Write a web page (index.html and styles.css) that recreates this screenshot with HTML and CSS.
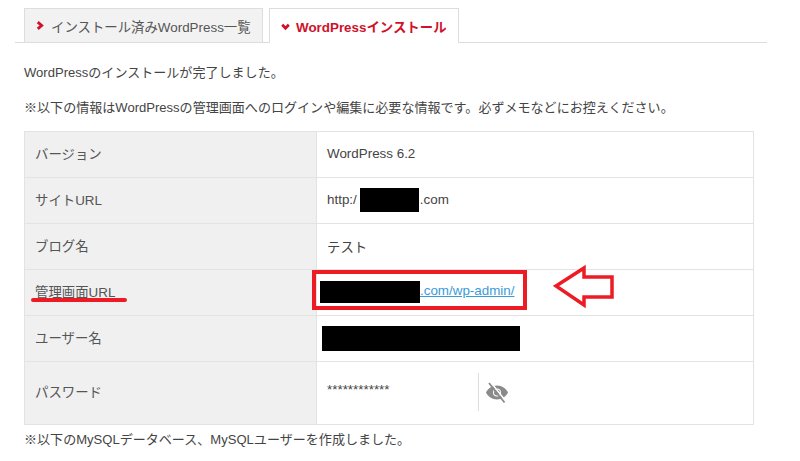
FILE: index.html
```html
<!DOCTYPE html>
<html lang="ja">
<head>
<meta charset="utf-8">
<title>WordPressインストール</title>
<link rel="stylesheet" href="styles.css">
</head>
<body>
<div class="page">
  <ul class="tabs">
    <li class="tab"><svg class="chev" viewBox="0 0 10 10"><path d="M2.500 2 6 5 2.500 8" /></svg>インストール済みWordPress一覧</li>
    <li class="tab active"><svg class="chev" viewBox="0 0 10 10"><path d="M2 3.500 5 6.500 8 3.500" /></svg>WordPressインストール</li>
  </ul>
  <div class="content">
    <p class="msg first">WordPressのインストールが完了しました。</p>
    <p class="msg second">※以下の情報はWordPressの管理画面へのログインや編集に必要な情報です。必ずメモなどにお控えください。</p>
    <table class="info">
      <tr class="r46"><th>バージョン</th><td>WordPress 6.2</td></tr>
      <tr class="r46"><th>サイトURL</th><td>http:/<span class="mask m-site"></span>.com</td></tr>
      <tr class="r46"><th>ブログ名</th><td>テスト</td></tr>
      <tr class="r46"><th>管理画面URL</th><td><a class="link" href="#"><span class="mask m-admin"></span>.com/wp-admin/</a></td></tr>
      <tr class="r46"><th>ユーザー名</th><td><span class="mask m-user"></span></td></tr>
      <tr class="r63"><th>パスワード</th><td>
        <div class="pw"><span class="stars">************</span>
          <span class="eye"><svg viewBox="0 0 24 24" width="24" height="24"><path class="eye-fill" d="M12 5.500C7 5.500 3 8.500 1 12.500c2 4 6 7 11 7s9-3 11-7c-2-4-6-7-11-7Zm0 11a4 4 0 1 1 0-8 4 4 0 0 1 0 8Z"/><circle class="eye-fill" cx="12" cy="12.500" r="3"/><path class="eye-gap" d="M5.500 2 21 21.500"/><path class="eye-slash" d="M4 3 19.500 22.500"/></svg></span>
        </div></td></tr>
    </table>
    <p class="msg third">※以下のMySQLデータベース、MySQLユーザーを作成しました。</p>
  </div>
  <div class="mark-line"></div>
  <div class="mark-box"></div>
  <svg class="mark-arrow" viewBox="0 0 64 44" width="64" height="44"><path d="M3 22 31 4V13H59V33H31V41Z"/></svg>
</div>
</body>
</html>
```
FILE: styles.css
```css
* { box-sizing: border-box; }
html, body { margin: 0; padding: 0; background: #fff; }
body {
  width: 800px; height: 461px; overflow: hidden;
  font-family: "Liberation Sans", "Noto Sans CJK JP", sans-serif;
  font-size: 13px; color: #444;
}
.page { position: relative; width: 800px; height: 461px; padding: 8px 33px 0 15px; }
.tabs {
  list-style: none; margin: 0; padding: 0 0 0 9px;
  display: flex; gap: 6px; height: 35px;
  border-bottom: 1px solid #ddd;
}
.tab {
  width: 239px; height: 34px; display: flex; align-items: center;
  padding-left: 10px; background: #f2f2f2; color: #555;
  border: 1px solid #ddd; border-bottom: 0; font-size: 13.400px;
}
.tab.active {
  width: 190px; height: 35px; background: #fff; color: #d0112b; font-weight: 700;
  padding-left: 10px; position: relative;
}
.chev { width: 11px; height: 11px; margin-right: 5px; flex: none; }
.chev path { fill: none; stroke: #d0112b; stroke-width: 2.600; }
.content { padding-left: 9px; width: 739px; }
.msg { margin: 0; font-size: 13.050px; line-height: 20px; color: #444; }
.first { padding-top: 20px; }
.second { padding-top: 15px; }
.third { padding-top: 5px; }
.info {
  border-collapse: collapse; table-layout: fixed; width: 730px; margin-top: 13px;
  border: 1px solid #e3e3e3;
}
.info th, .info td { border: 1px solid #e3e3e3; padding: 0 10px 2px; font-weight: 400; text-align: left; font-size: 13.400px; }
.info th { width: 292px; background: #f0f0f0; color: #555; padding-bottom: 4px; }
.r46 { height: 46px; }
.r63 { height: 63px; }
.mask { display: inline-block; background: #000; vertical-align: middle; }
.m-site { width: 59px; height: 24px; margin-left: 3px; margin-right: 1px; }
.m-admin { width: 100px; height: 22px; margin-left: -7px; }
.m-user { width: 198px; height: 25px; margin-left: -5px; margin-top: 2px; }
.link { color: #3a9bd9; text-decoration: underline; }
.pw { display: flex; align-items: center; }
.stars { width: 152px; height: 38px; line-height: 34px; border-right: 1px solid #ddd; }
.eye { padding: 0 0 0 6px; display: flex; }
.eye-fill { fill: #8a8a8a; }
.eye-gap { stroke: #fff; stroke-width: 1.500; fill: none; }
.eye-slash { stroke: #8a8a8a; stroke-width: 1.800; fill: none; }
.mark-line { position: absolute; left: 31px; top: 298px; width: 96px; height: 4px; border-radius: 2px; background: #ed1c24; }
.mark-box { position: absolute; left: 312px; top: 270px; width: 215px; height: 40px; border: 4px solid #ed1c24; }
.mark-arrow { position: absolute; left: 553px; top: 264px; }
.mark-arrow path { fill: #fff; stroke: #ed1c24; stroke-width: 3.500; }
```
